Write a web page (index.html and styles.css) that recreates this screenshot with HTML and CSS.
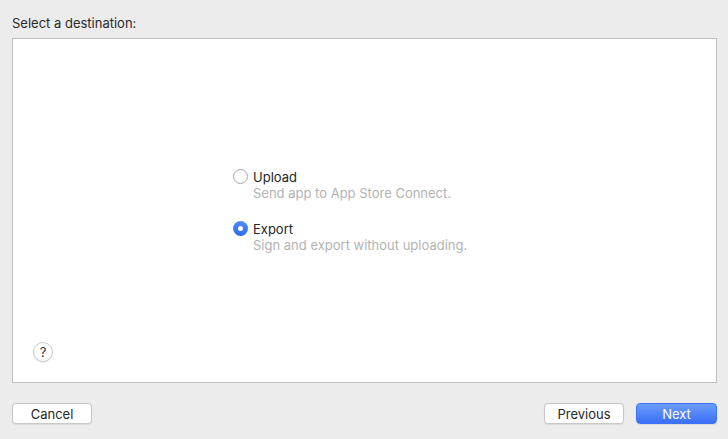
FILE: index.html
```html
<!DOCTYPE html>
<html>
<head>
<meta charset="utf-8">
<link rel="stylesheet" href="styles.css">
</head>
<body>
<div class="sheet">
  <div class="title">Select a destination:</div>
  <div class="panel">
    <div class="options">
      <div class="option">
        <span class="radio"></span>
        <div class="texts">
          <div class="label">Upload</div>
          <div class="desc">Send app to App Store Connect.</div>
        </div>
      </div>
      <div class="option">
        <span class="radio checked"></span>
        <div class="texts">
          <div class="label">Export</div>
          <div class="desc">Sign and export without uploading.</div>
        </div>
      </div>
    </div>
    <div class="help-row">
      <span class="help">?</span>
    </div>
  </div>
  <div class="footer">
    <button class="btn">Cancel</button>
    <div class="spacer"></div>
    <button class="btn">Previous</button>
    <button class="btn primary">Next</button>
  </div>
</div>
</body>
</html>
```
FILE: styles.css
```css
html, body {
  margin: 0;
  padding: 0;
  background: #ececec;
  font-family: Inter, "Liberation Sans", Arial, sans-serif;
  font-size: 13px;
  color: #262626;
}
.sheet {
  height: 439px;
  box-sizing: border-box;
  padding: 15px 11px 15px 12px;
  display: flex;
  flex-direction: column;
}
.title {
  height: 16px;
  line-height: 16px;
  margin-bottom: 7px;
  color: #2a2a2a;
}
.panel {
  height: 345px;
  box-sizing: border-box;
  background: #ffffff;
  border: 1px solid #bfbfbf;
  display: flex;
  flex-direction: column;
}
.options {
  flex: 1;
  display: flex;
  flex-direction: column;
  justify-content: center;
  padding-left: 220px;
  padding-top: 40px;
  gap: 20px;
}
.option {
  display: flex;
  align-items: flex-start;
}
.radio {
  width: 15px;
  height: 15px;
  box-sizing: border-box;
  border-radius: 50%;
  border: 1px solid #a6a6a6;
  background: #fff;
  margin-top: 0px;
  margin-right: 5px;
  flex: none;
  display: flex;
  align-items: center;
  justify-content: center;
}
.radio.checked {
  border: none;
  background: linear-gradient(#4f8bf9, #2f6cf3);
}
.radio.checked::after {
  content: "";
  width: 5px;
  height: 5px;
  border-radius: 50%;
  background: #fff;
}
.label {
  line-height: 16px;
  color: #262626;
}
.desc {
  line-height: 16px;
  color: #b3b3b3;
}
.help-row {
  padding: 0 0 20px 20px;
  display: flex;
}
.help {
  width: 20px;
  height: 20px;
  box-sizing: border-box;
  border-radius: 50%;
  border: 1px solid #cdcdcd;
  background: #fff;
  box-shadow: 0 0.5px 1px rgba(0,0,0,0.12);
  display: flex;
  align-items: center;
  justify-content: center;
  font-size: 13px;
  color: #333;
}
.footer {
  margin-top: 20px;
  display: flex;
  align-items: center;
  gap: 12px;
}
.spacer {
  flex: 1;
}
.btn {
  width: 80px;
  height: 21px;
  box-sizing: border-box;
  padding: 0;
  border: 1px solid #c8c8c8;
  border-radius: 4px;
  background: #ffffff;
  font-family: Inter, "Liberation Sans", Arial, sans-serif;
  font-size: 13px;
  color: #262626;
  box-shadow: 0 0.5px 1px rgba(0,0,0,0.08);
}
.btn.primary {
  width: 81px;
  border: 1px solid #3e73f5;
  background: linear-gradient(#6b9dfb, #3a6ef7);
  color: #ffffff;
}
```
